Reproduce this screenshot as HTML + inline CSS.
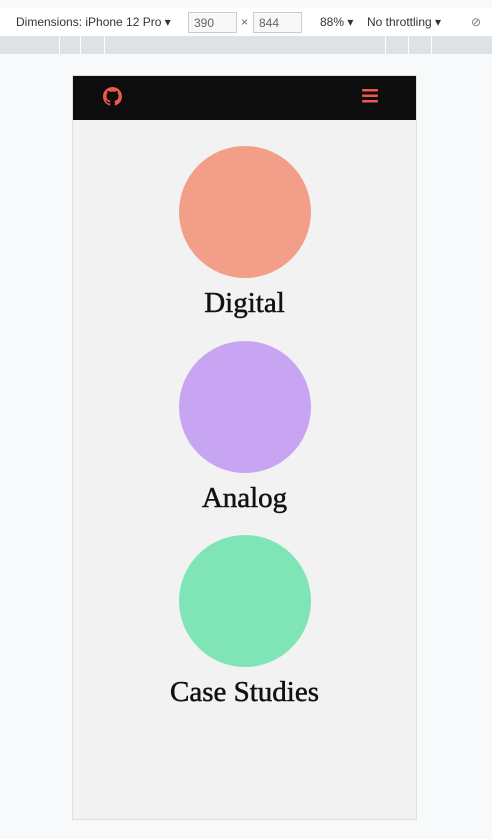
<!DOCTYPE html>
<html><head><style>
*{margin:0;padding:0;box-sizing:border-box}
body{width:492px;height:839px;background:#f8f9fa;position:relative;overflow:hidden;font-family:"Liberation Sans",sans-serif}
.tb{position:absolute;left:0;top:8px;width:492px;height:28px;background:#fff;font-size:12px;color:#333}
.tb span{position:absolute;top:7px}
.box{position:absolute;top:4px;height:21px;border:1px solid #ccc;background:#f8f8f8;color:#666;padding:3px 0 0 5px}
.ruler{position:absolute;top:36px;left:0;width:492px;height:18px;background:#dee1e6}
.ruler i{position:absolute;top:0;width:1px;height:18px;background:#fff}
.dev{position:absolute;left:72px;top:75px;width:345px;height:745px;background:#f2f2f2;border:1px solid #e0e0e0}
.hdr{position:absolute;left:0;top:0;width:343px;height:44px;background:#0d0d0d}
.c{position:absolute;left:106px;width:132px;height:132px;border-radius:50%}
.t{position:absolute;left:0;width:343px;text-align:center;font-family:"Liberation Serif",serif;font-size:29px;color:#111;-webkit-text-stroke:0.5px #111}
</style></head><body>
<div class="tb">
<span style="left:16px">Dimensions: iPhone 12 Pro ▾</span>
<div class="box" style="left:188px;width:49px">390</div>
<span style="left:241px;color:#666">×</span>
<div class="box" style="left:253px;width:49px">844</div>
<span style="left:320px">88% ▾</span>
<span style="left:367px">No throttling ▾</span>
<span style="left:471px;color:#777">⊘</span>
</div>
<div class="ruler"><i style="left:59px"></i><i style="left:80px"></i><i style="left:104px"></i><i style="left:385px"></i><i style="left:408px"></i><i style="left:431px"></i></div>
<div class="dev">
<div class="hdr">
<svg style="position:absolute;left:30px;top:11px" width="19" height="19" viewBox="0 0 16 16"><path fill="#f0584a" d="M8 0C3.58 0 0 3.58 0 8c0 3.54 2.29 6.53 5.47 7.59.4.07.55-.17.55-.38 0-.19-.01-.82-.01-1.49-2.01.37-2.53-.49-2.69-.94-.09-.23-.48-.94-.82-1.13-.28-.15-.68-.52-.01-.53.63-.01 1.08.58 1.23.82.72 1.21 1.87.87 2.33.66.07-.52.28-.87.51-1.07-1.78-.2-3.64-.89-3.64-3.95 0-.87.31-1.59.82-2.15-.08-.2-.36-1.02.08-2.12 0 0 .67-.21 2.2.82.64-.18 1.32-.27 2-.27.68 0 1.36.09 2 .27 1.53-1.04 2.2-.82 2.2-.82.44 1.1.16 1.92.08 2.12.51.56.82 1.27.82 2.15 0 3.07-1.87 3.75-3.65 3.95.29.25.54.73.54 1.48 0 1.07-.01 1.93-.01 2.2 0 .21.15.46.55.38A8.013 8.013 0 0016 8c0-4.42-3.58-8-8-8z"/></svg>
<svg style="position:absolute;left:289px;top:13px" width="16" height="14"><rect y="0" width="16" height="2.5" rx="1" fill="#f0584a"/><rect y="5.5" width="16" height="2.5" rx="1" fill="#f0584a"/><rect y="11" width="16" height="2.5" rx="1" fill="#f0584a"/></svg>
</div>
<div class="c" style="top:70px;background:#f39e89"></div>
<div class="t" style="top:211px">Digital</div>
<div class="c" style="top:265px;background:#c8a5f2"></div>
<div class="t" style="top:406px">Analog</div>
<div class="c" style="top:459px;background:#7fe5b7"></div>
<div class="t" style="top:600px">Case Studies</div>
</div>
</body></html>
